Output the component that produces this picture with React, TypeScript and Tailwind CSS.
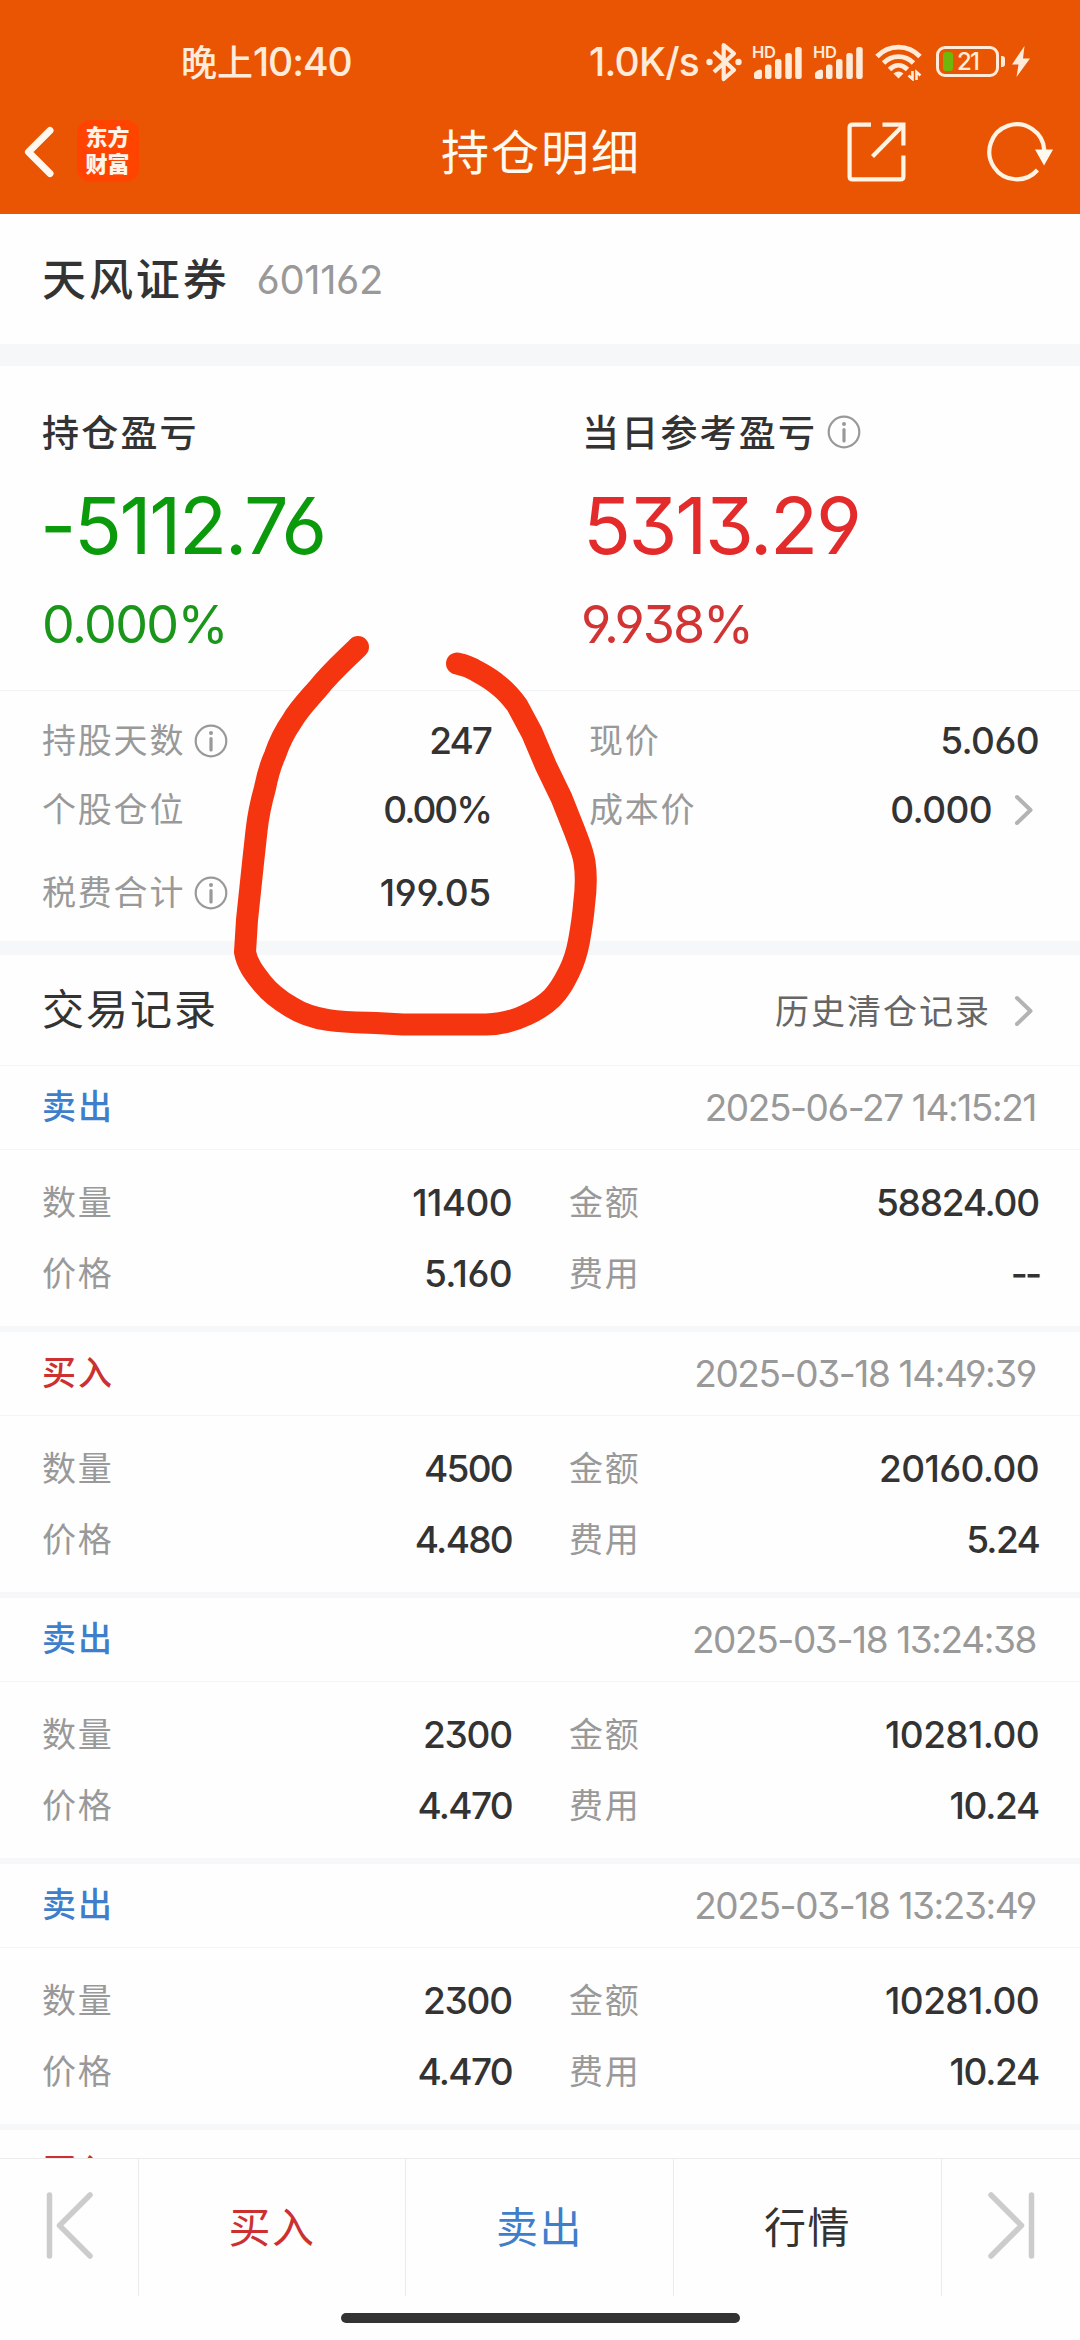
import React from "react";

const NUM = "font-['Inter','Noto_Sans_CJK_SC',sans-serif] [font-feature-settings:'cv03','cv04','cv09']";

type Trade = {
  side: "买入" | "卖出";
  time: string;
  qty: string;
  amount: string;
  price: string;
  fee: string;
};

const trades: Trade[] = [
  { side: "卖出", time: "2025-06-27 14:15:21", qty: "11400", amount: "58824.00", price: "5.160", fee: "--" },
  { side: "买入", time: "2025-03-18 14:49:39", qty: "4500", amount: "20160.00", price: "4.480", fee: "5.24" },
  { side: "卖出", time: "2025-03-18 13:24:38", qty: "2300", amount: "10281.00", price: "4.470", fee: "10.24" },
  { side: "卖出", time: "2025-03-18 13:23:49", qty: "2300", amount: "10281.00", price: "4.470", fee: "10.24" },
];

function Signal() {
  return (
    <div className="flex flex-none">
      <span className={`${NUM} -mr-[22px] h-[16px] w-[24px] text-[16.5px] leading-[16px] font-semibold tracking-[-0.4px]`}>HD</span>
      <svg width="48" height="34" viewBox="2 0 48 34" fill="#ffebda" className="mt-px shrink-0">
        <path d="M2 32V29Q2 26 8 24.500Q10 24.500 10 26.500V32Q10 34 8 34H4Q2 34 2 32Z" />
        <rect x="13" y="19.500" width="6.500" height="14.500" rx="2.500" />
        <rect x="23" y="14" width="6.500" height="20" rx="2.500" />
        <rect x="33.300" y="8" width="6.500" height="26" rx="2.500" />
        <rect x="43.200" y="2" width="6.500" height="32" rx="2.500" />
      </svg>
    </div>
  );
}

function StatusBar() {
  return (
    <div className="flex h-[90px] items-end text-[#ffebda]">
      <div className="flex h-[57px] w-full items-center">
        <span className={`${NUM} ml-[181px] w-[180px] text-[36px] leading-none font-medium whitespace-nowrap`}>
          晚上<span className="text-[39px] tracking-[-1.1px]">10:40</span>
        </span>
        <span className={`${NUM} ml-[228px] w-[115px] text-[39px] leading-none font-medium tracking-[-0.7px] whitespace-nowrap`}>1.0K/s</span>
        <svg width="40" height="42" viewBox="0 0 40 42" className="ml-[1px] shrink-0" fill="none" stroke="#ffebda" strokeWidth="4.200" strokeLinejoin="round">
          <path d="M9 10.500 29 29 18.700 38V4L29 12.500 9 31" />
          <circle cx="4.500" cy="21" r="3.200" fill="#ffebda" stroke="none" />
          <circle cx="33.500" cy="21" r="3.200" fill="#ffebda" stroke="none" />
        </svg>
        <div className="ml-[7px] flex gap-[11px]">
          <Signal />
          <Signal />
        </div>
        <svg width="48" height="38" viewBox="0 0 48 38" className="ml-[12px] shrink-0" fill="none" stroke="#ffebda" strokeWidth="4.800">
          <path d="M2 13.500C14 1 33 1 45 13.500" />
          <path d="M8.500 20C17 11.500 30 11.500 38.500 20" />
          <path d="M14.500 26.500C20 21 27 21 32.500 26.500" />
          <path d="M23.500 35.500 18.500 30.500Q23.500 26.500 28.500 30.500Z" fill="#ffebda" stroke="none" />
          <path d="M37.500 28V36L33.500 32.500M41.500 37V29L45.500 32.500" strokeWidth="2.600" />
        </svg>
        <div className="ml-[13px] flex h-[31px] w-[63px] shrink-0 items-center rounded-[9px] border-[3px] border-[#ffebda]">
          <span className="ml-[4px] h-[19px] w-[10px] rounded-[3px] bg-[#6fb70a]" />
          <span className={`${NUM} ml-[4px] text-[24px] leading-none font-medium tracking-[-1.8px]`}>21</span>
        </div>
        <span className="ml-[2px] h-[11px] w-[4px] rounded-r-[3px] bg-[#ffebda]" />
        <svg width="19" height="31" viewBox="0 0 19 31" className="ml-[6px] shrink-0" fill="#ffebda">
          <path d="M13.500 0 1 18.500H7.500L5.500 31 19 12.500H12Z" />
        </svg>
      </div>
    </div>
  );
}

function NavBar() {
  return (
    <div className="flex h-[124px] items-center">
      <svg width="34" height="56" viewBox="0 0 34 56" className="ml-[22px] shrink-0" fill="none" stroke="#fff8ee" strokeWidth="7" strokeLinecap="round" strokeLinejoin="round">
        <path d="M28 6.500 6.500 28 28 49.500" />
      </svg>
      <div className="-mt-[2px] ml-[21px] flex h-[62px] w-[62px] shrink-0 flex-col items-center justify-center rounded-[13px] bg-[#ff4300] pr-px pb-[4px] font-['Noto_Sans_CJK_SC',sans-serif] text-[22px] leading-[27px] font-black text-[#fff3ea]">
        <span>东方</span>
        <span>财富</span>
      </div>
      <h1 className="ml-[302px] w-[204px] shrink-0 -translate-y-[3px] text-[48px] leading-none tracking-[2px] whitespace-nowrap text-[#fffaf0]">持仓明细</h1>
      <svg width="60" height="60" viewBox="0 0 60 60" className="ml-[202px] shrink-0" fill="none" stroke="#fff3e4" strokeWidth="4.200">
        <path d="M24 2.600H5.500Q2.600 2.600 2.600 5.500V54.500Q2.600 57.400 5.500 57.400H53.500Q56.400 57.400 56.400 54.500V33.500" />
        <path d="M35.500 2.600H56.400V23.500" />
        <path d="M55 4.500 25.500 34.500" />
      </svg>
      <svg width="68" height="62" viewBox="0 0 68 62" className="ml-[80px] shrink-0" fill="none" stroke="#fff3e4" strokeWidth="4.200">
        <path d="M50.500 49A27.500 27.500 0 1 1 57.300 29" />
        <path d="M48 28.500H66L57 44.500Z" fill="#fffaf0" stroke="none" />
      </svg>
    </div>
  );
}

function Info() {
  return (
    <svg width="34" height="34" viewBox="0 0 34 34" className="shrink-0">
      <circle cx="17" cy="17" r="15.300" fill="none" stroke="#999" strokeWidth="2.200" />
      <circle cx="17" cy="9" r="2" fill="#999" />
      <path d="M17 14.500V26" stroke="#999" strokeWidth="3.200" strokeLinecap="round" />
    </svg>
  );
}

function Chevron() {
  return (
    <svg width="20" height="32" viewBox="0 0 20 32" className="shrink-0" fill="none" stroke="#b3b3b3" strokeWidth="4" strokeLinecap="round" strokeLinejoin="round">
      <path d="M3 3 16.500 16 3 29" />
    </svg>
  );
}

const label = "-translate-y-[2px] text-[34px] leading-none tracking-[1.8px] whitespace-nowrap text-[#999]";
const valueBase = `${NUM} text-[37px] leading-none font-medium whitespace-nowrap text-[#333]`;

function Value({ children }: { children: string }) {
  const ones = children.split("1").length - 1;
  const tracking =
    children === "--"
      ? "tracking-[-3px]"
      : children.includes("%") || children === "247"
        ? "tracking-[-2px]"
        : children.includes("4") && children.length <= 5 && ones === 0
          ? "tracking-[-1.7px]"
          : ones === 1 && children.length === 5 && children.includes("4")
            ? "tracking-[-1.3px]"
            : children === "58824.00" || children === "2300"
              ? "tracking-[-1.2px]"
              : children === "199.05"
                ? "tracking-[-0.2px]"
                : "tracking-[-0.6px]";
  return <span className={`${valueBase} ${tracking}`}>{children}</span>;
}

function Summary() {
  return (
    <section className="h-[575px]">
      <div className="flex h-[325px] border-b border-[#f3f3f5]">
        <div className="flex w-[583px] flex-col pl-[42px]">
          <div className="mt-[48px] flex h-[34px] items-center text-[37px] leading-none font-medium tracking-[2.2px] text-[#333]">持仓盈亏</div>
          <div className={`${NUM} mt-[37px] -ml-[2px] flex h-[80px] items-center text-[79px] leading-none tracking-[-2.4px] text-[#0b9a0b]`}>-5112.76</div>
          <div className={`${NUM} mt-[34px] flex h-[52px] items-center text-[52px] leading-none tracking-[-1.6px] text-[#1a961a]`}>0.000%</div>
        </div>
        <div className="flex flex-col">
          <div className="mt-[48px] -ml-px flex h-[34px] items-center text-[37px] leading-none font-medium tracking-[2.2px] text-[#333]">
            当日参考盈亏
            <span className="mt-px ml-[10px]"><Info /></span>
          </div>
          <div className={`${NUM} mt-[37px] flex h-[80px] items-center text-[79px] leading-none tracking-[-2.4px] text-[#e32b2b]`}>5313.29</div>
          <div className={`${NUM} mt-[34px] -ml-[2px] flex h-[52px] items-center text-[52px] leading-none tracking-[-2px] text-[#d23434]`}>9.938%</div>
        </div>
      </div>
      <div className="flex h-[250px]">
        <div className="flex w-[491px] flex-col pt-[15px] pl-[42px]">
          <div className="flex h-[69px] items-center">
            <span className={label}>持股天数</span>
            <span className="ml-[9px]"><Info /></span>
            <span className="ml-auto flex"><Value>247</Value></span>
          </div>
          <div className="flex h-[69px] items-center justify-between">
            <span className={label}>个股仓位</span>
            <Value>0.00%</Value>
          </div>
          <div className="mt-[14px] flex h-[69px] items-center">
            <span className={label}>税费合计</span>
            <span className="ml-[9px]"><Info /></span>
            <span className="ml-auto flex"><Value>199.05</Value></span>
          </div>
        </div>
        <div className="flex flex-1 flex-col pt-[15px] pr-[41px] pl-[98px]">
          <div className="flex h-[69px] items-center justify-between">
            <span className={label}>现价</span>
            <Value>5.060</Value>
          </div>
          <div className="flex h-[69px] items-center">
            <span className={label}>成本价</span>
            <span className="mr-[22px] ml-auto flex"><Value>0.000</Value></span>
            <span className="mr-[5px]"><Chevron /></span>
          </div>
        </div>
      </div>
    </section>
  );
}

function SideLabel({ side }: { side: Trade["side"] }) {
  return (
    <span className={`-translate-y-[3px] text-[34px] leading-none font-medium tracking-[2px] ${side === "卖出" ? "text-[#3e7ecb]" : "text-[#cc3030]"}`}>
      {side}
    </span>
  );
}

function TradeCard({ t }: { t: Trade }) {
  return (
    <article className="h-[266px] border-b-[6px] border-[#f6f7f9]">
      <div className="flex h-[84px] items-center justify-between border-b border-[#f5f5f7] pr-[44px] pl-[42px]">
        <SideLabel side={t.side} />
        <span className={`${NUM} text-[37px] leading-none tracking-[-1.4px] text-[#999]`}>{t.time}</span>
      </div>
      <div className="grid grid-cols-[470px_470px] gap-x-[57px] pt-[17px] pl-[42px]">
        {[
          ["数量", t.qty],
          ["金额", t.amount],
          ["价格", t.price],
          ["费用", t.fee],
        ].map(([k, v]) => (
          <div key={k} className="flex h-[71px] items-center justify-between">
            <span className={label}>{k}</span>
            <Value>{v}</Value>
          </div>
        ))}
      </div>
    </article>
  );
}

function BottomBar() {
  const item = "flex items-center justify-center border-r border-[#ebebeb] pb-[6px] text-[42px] leading-none tracking-[1.5px]";
  return (
    <nav className="h-[182px] shrink-0 border-t border-[#ebebeb] bg-[#fefefe]">
      <div className="grid h-[137px] grid-cols-[139px_267px_268px_268px_138px]">
        <div className={item}>
          <svg width="50" height="70" viewBox="0 0 50 70" fill="none" stroke="#ccc" strokeWidth="5.500" strokeLinecap="round" strokeLinejoin="round">
            <path d="M5.500 5V66M46 5 15.500 35.500 46 66" />
          </svg>
        </div>
        <div className={`${item} text-[#cc3030]`}>买入</div>
        <div className={`${item} text-[#3e7ecb]`}>卖出</div>
        <div className={`${item} text-[#333]`}>行情</div>
        <div className="flex items-center justify-center pb-[6px] pl-[2px]">
          <svg width="50" height="70" viewBox="0 0 50 70" fill="none" stroke="#ccc" strokeWidth="5.500" strokeLinecap="round" strokeLinejoin="round">
            <path d="M44.500 5V66M4 5 34.500 35.500 4 66" />
          </svg>
        </div>
      </div>
      <div className="mx-auto mt-[17px] h-[10px] w-[399px] rounded-full bg-[#333]" />
    </nav>
  );
}

function Scribble() {
  return (
    <svg width="1080" height="1100" viewBox="0 0 1080 1100" className="pointer-events-none absolute top-0 left-0" fill="none" stroke="#f53510" strokeWidth="22" strokeLinecap="round" strokeLinejoin="round">
      <path d="M358 647C345 660 331 672 317.500 689C307 701 299 709 292 721C283 734 279 743 275 755C269 768 267 778 265 788C260 806 258 817 256.600 830L253 863L247 920L245 952C247 964 254 973 262 983C270 993 279 1000 291 1007C302 1014 315 1018 328 1020C345 1022.500 360 1022.500 376 1023L403 1024.500H486C503 1024 514 1021 526 1015C537 1010 544 1006 552 998C560 990 564 982 569 972C575 960 577 952 579 941C582 924 583 918 584 905C586 890 586.500 875 584.500 862C583 852 579 843 575 832L561.500 798L546 766L532 733L517 705C511 697 506 691 498 685C491 679 484 675 476.500 671C470 667 464 665 457 663.500" />
    </svg>
  );
}

export default function App() {
  return (
    <div className="relative flex h-[2340px] w-[1080px] flex-col overflow-hidden bg-[#fefefe] font-['Noto_Sans_CJK_SC',sans-serif]">
      <header className="h-[214px] shrink-0 bg-[#ea5504]">
        <StatusBar />
        <NavBar />
      </header>
      <main className="min-h-0 flex-1 overflow-hidden">
        <div className="flex h-[130px] items-center pl-[42px]">
          <span className="-translate-y-[2px] text-[44px] leading-none font-medium tracking-[2.9px] text-[#333]">天风证券</span>
          <span className={`${NUM} ml-[27px] translate-y-px text-[40px] leading-none tracking-[-0.4px] text-[#999]`}>601162</span>
        </div>
        <div className="h-[22px] bg-[#f6f7f9]" />
        <Summary />
        <div className="h-[14px] bg-[#f6f7f9]" />
        <div className="flex h-[111px] items-center justify-between border-b border-[#f5f5f7] pr-[46px] pl-[42px]">
          <h2 className="-translate-y-[3px] text-[42px] leading-none tracking-[2px] text-[#333]">交易记录</h2>
          <div className="flex items-center">
            <span className="text-[34px] leading-none tracking-[2px] text-[#666]">历史清仓记录</span>
            <span className="mt-px ml-[23px]"><Chevron /></span>
          </div>
        </div>
        {trades.map((t) => (
          <TradeCard key={t.time} t={t} />
        ))}
        <div className="flex h-[84px] items-center pl-[42px]">
          <SideLabel side="买入" />
        </div>
      </main>
      <BottomBar />
      <Scribble />
    </div>
  );
}
